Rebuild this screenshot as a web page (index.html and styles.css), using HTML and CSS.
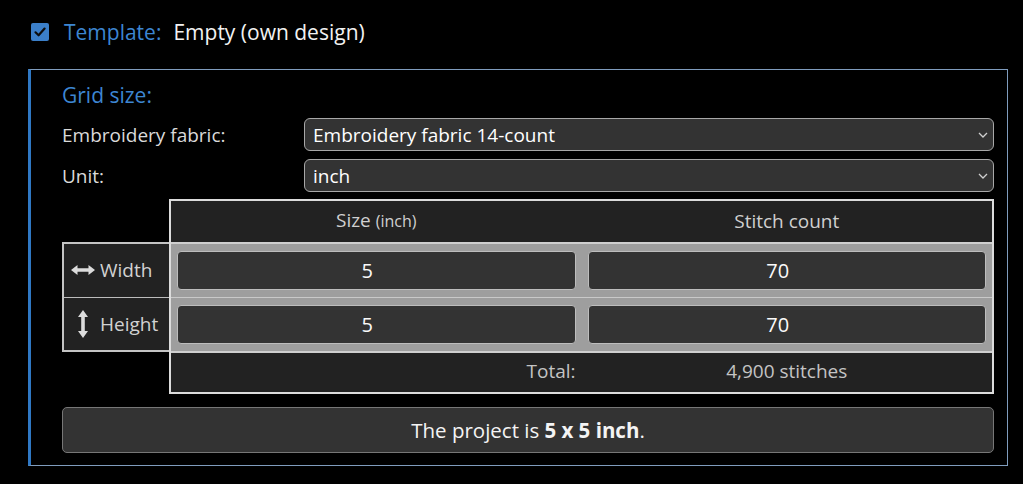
FILE: index.html
```html
<!DOCTYPE html>
<html lang="en">
<head>
<meta charset="utf-8">
<title>Grid size</title>
<link rel="stylesheet" href="styles.css">
</head>
<body>
<div class="top">
  <span class="checkbox">
    <svg width="18" height="18" viewBox="0 0 18 18"><path d="M4.5 9.3 L7.6 12.3 L13.6 5.6" fill="none" stroke="#0d0d0d" stroke-width="2.2" stroke-linecap="round" stroke-linejoin="round"/></svg>
  </span>
  <span class="top-label">Template:</span>
  <span class="top-value">Empty (own design)</span>
</div>

<section class="panel">
  <h2 class="panel-title">Grid size:</h2>

  <div class="form-row">
    <span class="form-label">Embroidery fabric:</span>
    <div class="select">
      <span>Embroidery fabric 14-count</span>
      <svg class="chev" width="10" height="6" viewBox="0 0 10 6"><path d="M1 1 L5 5 L9 1" fill="none" stroke="#cfcfcf" stroke-width="1.3"/></svg>
    </div>
  </div>
  <div class="form-row">
    <span class="form-label">Unit:</span>
    <div class="select">
      <span>inch</span>
      <svg class="chev" width="10" height="6" viewBox="0 0 10 6"><path d="M1 1 L5 5 L9 1" fill="none" stroke="#cfcfcf" stroke-width="1.3"/></svg>
    </div>
  </div>

  <div class="size-area">
    <div class="row-heads">
      <div class="row-head">
        <span class="ico">
          <svg width="24" height="10" viewBox="0 0 24 10"><path d="M0 5 L6.5 0 V3.2 H17.5 V0 L24 5 L17.5 10 V6.8 H6.5 V10 Z" fill="#dcdcdc"/></svg>
        </span>
        <span>Width</span>
      </div>
      <div class="row-head">
        <span class="ico">
          <svg width="10" height="28" viewBox="0 0 10 28"><path d="M5 0 L10 7 H6.8 V21 H10 L5 28 L0 21 H3.2 V7 H0 Z" fill="#dcdcdc"/></svg>
        </span>
        <span>Height</span>
      </div>
    </div>

    <div class="size-table">
      <div class="t-head">
        <span>Size <small>(inch)</small></span>
        <span>Stitch count</span>
      </div>
      <div class="t-row">
        <div class="num-input">5</div>
        <div class="num-input">70</div>
      </div>
      <div class="t-row">
        <div class="num-input">5</div>
        <div class="num-input">70</div>
      </div>
      <div class="t-total">
        <span class="total-label">Total:</span>
        <span class="total-value">4,900 stitches</span>
      </div>
    </div>
  </div>

  <div class="summary">The project is <b>5 x 5 inch</b>.</div>
</section>
</body>
</html>
```

FILE: styles.css
```css
* { box-sizing: border-box; }

html, body {
  margin: 0;
  padding: 0;
  background: #000;
}

body {
  font-family: "Open Sans", "Noto Sans", sans-serif;
  color: #e6e6e6;
  width: 1023px;
  height: 484px;
  overflow: hidden;
}

/* top line */
.top {
  display: flex;
  align-items: center;
  height: 30px;
  margin-top: 17px;
  padding-left: 31px;
}

.checkbox {
  width: 18px;
  height: 18px;
  border-radius: 2px;
  background: #3b7fc9;
  display: flex;
}

.top-label {
  margin-left: 15px;
  font-size: 21px;
  color: #3d86d2;
}

.top-value {
  margin-left: 12px;
  font-size: 21px;
  color: #f2f2f2;
}

/* panel */
.panel {
  margin: 22px 0 0 28px;
  width: 980px;
  border: 1px solid #7f9cbd;
  border-left: 3px solid #2f78c4;
  padding: 11px 13px 12px 31px;
}

.panel-title {
  margin: 0 0 9px;
  font-weight: normal;
  font-size: 21px;
  line-height: 28px;
  color: #3d86d2;
}

.form-row {
  display: flex;
  align-items: center;
  height: 33px;
  margin-bottom: 8px;
}

.form-label {
  width: 242px;
  font-size: 19px;
  color: #dadada;
}

.select {
  flex: 1;
  height: 33px;
  display: flex;
  align-items: center;
  justify-content: space-between;
  padding: 0 5px 0 8px;
  border: 1px solid #a8a8a8;
  border-radius: 6px;
  background: #333;
  color: #fff;
  font-size: 19px;
}

.chev { margin-top: 1px; }

/* size table */
.size-area {
  display: flex;
  margin-top: -1px;
}

.row-heads {
  width: 107px;
  margin-top: 43px;
  height: 110px;
  border: 2px solid #c4c4c4;
  border-right: none;
  background: #222;
  display: flex;
  flex-direction: column;
}

.row-head {
  flex: 1;
  display: flex;
  align-items: center;
  font-size: 19px;
  color: #d2d2d2;
}

.row-head + .row-head {
  border-top: 1px solid #bdbdbd;
}

.ico {
  width: 24px;
  margin-left: 7px;
  margin-right: 5px;
  display: flex;
  justify-content: center;
}

.size-table {
  flex: 1;
  border: 2px solid #dcdcdc;
  background: #222;
}

.t-head,
.t-row,
.t-total {
  display: grid;
  grid-template-columns: 1fr 1fr;
  column-gap: 12px;
  padding: 0 6px;
}

.t-head {
  height: 43px;
  align-items: center;
  border-bottom: 2px solid #cfcfcf;
  font-size: 19px;
  line-height: 24px;
  color: #d0d0d0;
  text-align: center;
  padding-bottom: 2px;
}

.t-head small {
  font-size: 16px;
}

.t-row {
  background: #9e9e9e;
  padding-top: 7px;
  padding-bottom: 7px;
}

.t-row + .t-row {
  border-top: 1px solid #c9c9c9;
}

.num-input {
  height: 39px;
  border: 1px solid #bdbdbd;
  border-radius: 4px;
  background: #333;
  color: #fafafa;
  font-size: 20px;
  display: flex;
  align-items: center;
  justify-content: center;
  padding-right: 18px;
}

.t-total {
  height: 41px;
  align-items: center;
  border-top: 2px solid #cfcfcf;
  font-size: 19px;
  color: #c4c4c4;
  padding-bottom: 3px;
}

.total-label { text-align: right; }
.total-value { text-align: center; }

/* summary */
.summary {
  margin-top: 13px;
  height: 46px;
  display: flex;
  align-items: center;
  justify-content: center;
  border: 1px solid #777;
  border-radius: 5px;
  background: #333;
  font-size: 20.5px;
  color: #f4f4f4;
}

.summary b { font-weight: 700; margin-left: 0.25em; }
```
